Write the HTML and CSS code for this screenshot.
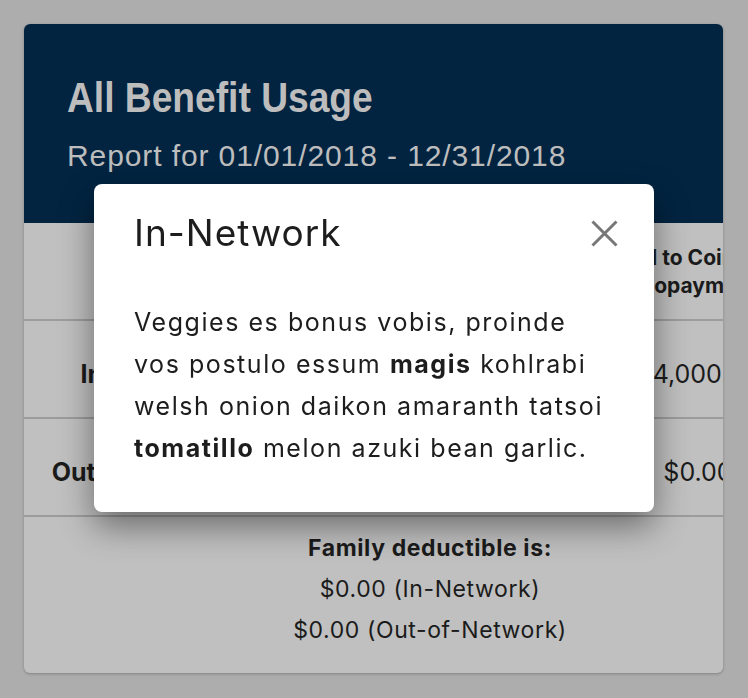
FILE: index.html
```html
<!DOCTYPE html>
<html lang="en">
<head>
<meta charset="utf-8">
<title>All Benefit Usage</title>
<link rel="stylesheet" href="styles.css">
</head>
<body>
<div class="card">
  <header class="card-head">
    <h1 class="title">All Benefit Usage</h1>
    <p class="subtitle">Report for 01/01/2018 - 12/31/2018</p>
  </header>
  <div class="table">
    <div class="row row-head">
      <div class="cell label"></div>
      <div class="cell">Deductible<br>Met</div>
      <div class="cell">Out-of-Pocket<br>Met</div>
      <div class="cell last">Applied to Coinsurance<br>Copayment</div>
    </div>
    <div class="row">
      <div class="cell label">In-Network</div>
      <div class="cell">$1,500.00</div>
      <div class="cell">$2,250.00</div>
      <div class="cell last">$4,000.00</div>
    </div>
    <div class="row">
      <div class="cell label">Out-of-Network</div>
      <div class="cell">$0.00</div>
      <div class="cell">$0.00</div>
      <div class="cell last">$0.00</div>
    </div>
  </div>
  <div class="card-foot">
    <p class="foot-title">Family deductible is:</p>
    <p>$0.00 (In-Network)</p>
    <p>$0.00 (Out-of-Network)</p>
  </div>
</div>

<div class="modal" role="dialog">
  <div class="modal-head">
    <h2 class="modal-title">In-Network</h2>
    <button class="close" aria-label="Close">
      <svg width="27" height="27" viewBox="0 0 27 27"><path d="M1.5 1.5 L25.5 25.5 M25.5 1.5 L1.5 25.5" stroke="#777" stroke-width="3" fill="none"/></svg>
    </button>
  </div>
  <p class="modal-text">Veggies es bonus vobis, proinde<br>vos postulo essum <b>magis</b> kohlrabi<br>welsh onion daikon amaranth tatsoi<br><b>tomatillo</b> melon azuki bean garlic.</p>
</div>
</body>
</html>
```

FILE: styles.css
```css
* { box-sizing: border-box; }

html, body {
  margin: 0;
  padding: 0;
}

body {
  background: #adadad;
  padding: 24px 25px 25px 24px;
  font-family: Inter, "Liberation Sans", Arial, sans-serif;
  color: #1b1b1b;
  height: 698px;
  overflow: hidden;
}

.card {
  width: 699px;
  height: 649px;
  background: #c0c0c0;
  border-radius: 6px;
  overflow: hidden;
  box-shadow: 0 1px 3px rgba(0, 0, 0, 0.25);
  display: flex;
  flex-direction: column;
}

.card-head {
  background: #022441;
  height: 199px;
  padding: 54px 0 0 43px;
  flex: none;
}

.title {
  margin: 0;
  font-family: "Liberation Sans", Arial, sans-serif;
  font-weight: 700;
  font-size: 42px;
  line-height: 40px;
  color: #bdbdbd;
  transform: scaleX(0.885);
  transform-origin: left center;
  white-space: nowrap;
}

.subtitle {
  margin: 21px 0 0;
  font-family: "Liberation Sans", Arial, sans-serif;
  font-size: 30px;
  line-height: 34px;
  letter-spacing: 0.9px;
  color: #bdbdbd;
  white-space: nowrap;
}

.table {
  flex: none;
}

.row {
  display: grid;
  grid-template-columns: 252px 174px 183px 130px;
  height: 98px;
  border-bottom: 2px solid #9c9c9c;
}

.cell {
  display: flex;
  align-items: center;
  justify-content: center;
  text-align: center;
  white-space: nowrap;
  font-size: 25px;
  padding-top: 10px;
}

.cell.label {
  font-weight: 700;
}

.row-head .cell {
  font-size: 21px;
  font-weight: 700;
  line-height: 28px;
  align-items: flex-end;
  padding: 0 0 19px;
}

.card-foot {
  flex: 1;
  padding: 11px 0 0 113px;
  text-align: center;
}

.card-foot p {
  margin: 0;
  font-size: 23px;
  line-height: 41px;
  letter-spacing: 0.6px;
}

.card-foot .foot-title {
  font-weight: 700;
}

.modal {
  position: fixed;
  left: 94px;
  top: 184px;
  width: 560px;
  height: 328px;
  background: #ffffff;
  border-radius: 8px;
  padding: 27px 36px 0 40px;
  box-shadow: 0 14px 34px rgba(0, 0, 0, 0.45);
}

.modal-head {
  display: flex;
  justify-content: space-between;
  align-items: flex-start;
}

.modal-title {
  margin: 0;
  font-weight: 400;
  font-size: 37px;
  line-height: 44px;
  color: #1d1d1d;
  letter-spacing: 1px;
}

.close {
  border: 0;
  background: none;
  padding: 0;
  margin-top: 9px;
  width: 27px;
  height: 27px;
  cursor: pointer;
}

.close svg { display: block; }

.modal-text {
  margin: 46px 0 0;
  font-size: 25px;
  line-height: 42px;
  color: #1d1d1d;
  letter-spacing: 1.55px;
  white-space: nowrap;
}

.modal-text b { font-weight: 700; }
```
